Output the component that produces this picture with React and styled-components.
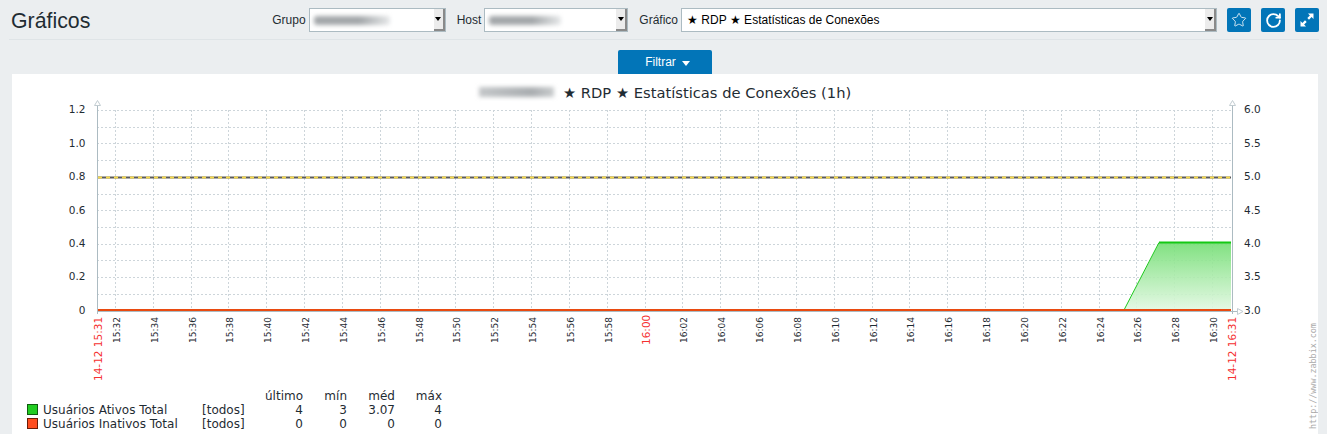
import React from 'react'
import styled, { createGlobalStyle } from 'styled-components'
import { Star, RotateCw } from 'lucide-react'

const GlobalStyle = createGlobalStyle`
    html, body {
        margin: 0;
        padding: 0;
        background-color: #ebeef0;
        height: 434px;
        overflow: hidden;
    }
`

const Page = styled.div`
    width: 1327px;
    height: 434px;
    overflow: hidden;
    font-family: "Liberation Sans", Arial, sans-serif;
    color: #1f2c33;
`

const Header = styled.header`
    height: 39px;
    margin: 0 8px 0 9px;
    box-sizing: content-box;
    border-bottom: 1px solid #dfe4e7;
    display: flex;
    align-items: flex-start;
    justify-content: space-between;
`

const Title = styled.h1`
    margin: 7px 0 0 2px;
    font-size: 21.3px;
    line-height: 28px;
    font-weight: 400;
`

const Controls = styled.div`
    display: flex;
    align-items: center;
    height: 24px;
    margin-top: 8px;
`

const Label = styled.label`
    font-size: 12px;
    margin-right: 3px;
    margin-left: ${({ $gap }) => $gap || 0}px;
`

const Select = styled.div`
    width: ${({ $width }) => $width}px;
    height: 24px;
    box-sizing: border-box;
    border: 1px solid #acbbc2;
    background-color: #ffffff;
    display: flex;
    align-items: center;
    justify-content: space-between;
    font-size: 12px;
    color: #000000;
`

const SelectText = styled.span`
    padding-left: 5px;
`

const Blurred = styled.span`
    display: block;
    width: ${({ $width }) => $width}px;
    height: 9px;
    margin-left: 4px;
    background: linear-gradient(to right, #a3a7aa 60%, #e6e8e9);
    border-radius: 3px;
    filter: blur(2px);
`

const Arrow = styled.span`
    width: 11px;
    height: 22px;
    box-sizing: border-box;
    background-color: #ececec;
    border-right: 2px solid #8a8a8a;
    border-bottom: 2px solid #8a8a8a;
    display: flex;
    align-items: center;
    justify-content: center;
    &::after {
        content: '';
        border-left: 3px solid transparent;
        border-right: 3px solid transparent;
        border-top: 4px solid #000000;
    }
`

const IconButton = styled.button`
    width: 24px;
    height: 24px;
    margin-left: 10px;
    padding: 0;
    border: none;
    border-radius: 2px;
    background-color: #0275b8;
    color: #ffffff;
    display: flex;
    align-items: center;
    justify-content: center;
`

const FilterRow = styled.div`
    display: flex;
    justify-content: center;
    padding-top: 10px;
    padding-left: 3px;
`

const FilterTab = styled.button`
    width: 94px;
    height: 24px;
    padding: 0 0 0 5px;
    border: none;
    border-radius: 2px 2px 0 0;
    background-color: #0275b8;
    color: #ffffff;
    font-family: inherit;
    font-size: 12px;
    display: flex;
    align-items: center;
    justify-content: center;
    gap: 6px;
    &::after {
        content: '';
        margin-top: 3px;
        border-left: 4.5px solid transparent;
        border-right: 4.5px solid transparent;
        border-top: 5px solid #ffffff;
    }
`

const Panel = styled.main`
    width: 1306px;
    height: 360px;
    margin-left: 12px;
    background-color: #ffffff;
`

const Graph = styled.svg`
    display: block;
    font-family: "DejaVu Sans", sans-serif;
`

const GraphText = styled.text`
    font-size: ${({ $size }) => $size || 10.5}px;
    fill: ${({ $color }) => $color || '#1f2c33'};
`

const X0 = 97
const X1 = 1232
const PER_MIN = (X1 - X0) / 60
const yMajor = [
    ['1.2', '6.0'], ['1.0', '5.5'], ['0.8', '5.0'], ['0.6', '4.5'],
    ['0.4', '4.0'], ['0.2', '3.5'], ['0', '3.0'],
]
const rowY = (i) => 109.4 + i * 33.4

const minutes = []
for (let m = 32; m <= 90; m += 2) minutes.push(m)
const timeLabel = (m) => `${m < 60 ? 15 : 16}:${String(m % 60).padStart(2, '0')}`
const minX = (m) => Math.round(X0 + (m - 31) * PER_MIN) + 0.5

const legendRows = [
    { name: 'Usuários Ativos Total', fill: '#22cc22', stroke: '#0f5c0f', values: ['4', '3', '3.07', '4'], y: 414, box: 404.5 },
    { name: 'Usuários Inativos Total', fill: '#ff4d1f', stroke: '#6b1c08', values: ['0', '0', '0', '0'], y: 428, box: 418.5 },
]
const legendCols = [
    { head: 'último', x: 303 },
    { head: 'mín', x: 347 },
    { head: 'méd', x: 395 },
    { head: 'máx', x: 442 },
]

const Chart = () => (
    <Graph width="1306" height="360" viewBox="12 74 1306 360">
        <defs>
            <linearGradient id="area" x1="0" y1="0" x2="0" y2="1">
                <stop offset="0" stopColor="#74de74" />
                <stop offset="1" stopColor="#e2f8e2" />
            </linearGradient>
            <linearGradient id="fade" x1="0" y1="0" x2="1" y2="0">
                <stop offset="0" stopColor="#c4c7c9" />
                <stop offset="0.7" stopColor="#a9adb0" />
                <stop offset="1" stopColor="#c9cccd" />
            </linearGradient>
            <filter id="soft" x="-20%" y="-60%" width="140%" height="220%">
                <feGaussianBlur stdDeviation="2" />
            </filter>
        </defs>

        <rect x="479" y="87" width="75" height="10" fill="url(#fade)" filter="url(#soft)" />
        <GraphText x="563" y="98" $size={14.7}>★ RDP ★ Estatísticas de Conexões (1h)</GraphText>

        {/* grid */}
        <g stroke="#cdd5da" strokeDasharray="2 2" shapeRendering="crispEdges">
            {Array.from({ length: 12 }, (_, i) => {
                const y = Math.round(110 + i * 16.7) + 0.5
                return <line key={i} x1={X0} x2={X1} y1={y} y2={y} />
            })}
            {minutes.map((m) => (
                <line key={m} x1={minX(m) - 1} x2={minX(m) - 1} y1="110" y2="310" />
            ))}
        </g>

        {/* green item */}
        <polygon points="1124,310 1159,243 1231,243 1231,310" fill="url(#area)" fillOpacity="0.9" />
        <polyline points="1124,310 1159,242.5" fill="none" stroke="#1ec81e" strokeWidth="1" />
        <line x1="1159" x2="1231" y1="242.5" y2="242.5" stroke="#14c814" strokeWidth="2" />

        {/* trigger lines */}
        <line x1="98" x2="1231" y1="177.5" y2="177.5" stroke="#5a5a5a" strokeWidth="2" />
        <line x1="98" x2="1231" y1="177.5" y2="177.5" stroke="#f5d94e" strokeWidth="2" strokeDasharray="4 4" />

        {/* inactive item */}
        <line x1="98" x2="1231" y1="310" y2="310" stroke="#e94a10" strokeWidth="2" />

        {/* axes */}
        <g stroke="#acbbc2" shapeRendering="crispEdges">
            <line x1="97.5" x2="97.5" y1="105" y2="314" />
            <line x1="1232.5" x2="1232.5" y1="105" y2="314" />
            <line x1="97" x2="1238" y1="311.5" y2="311.5" />
        </g>
        <g fill="#ffffff" stroke="#c2ccd1">
            <polygon points="97.5,100.5 94.5,105.5 100.5,105.5" />
            <polygon points="1232.5,100.5 1229.5,105.5 1235.5,105.5" />
            <polygon points="1243,311.5 1237.5,308.5 1237.5,314.5" />
        </g>

        {yMajor.map(([left, right], i) => (
            <g key={left}>
                <GraphText x="85.5" y={rowY(i) + 4} textAnchor="end">{left}</GraphText>
                <GraphText x="1244" y={rowY(i) + 4}>{right}</GraphText>
            </g>
        ))}

        {minutes.map((m) => {
            const red = m === 60
            return (
                <GraphText
                    key={m}
                    transform={`translate(${minX(m) + 3.5} ${red ? 345 : 343}) rotate(-90)`}
                    $size={red ? 10.5 : 9}
                    $color={red ? '#f53030' : '#1f2c33'}
                >
                    {timeLabel(m)}
                </GraphText>
            )
        })}
        <GraphText transform="translate(102 381) rotate(-90)" $color="#f53030">14-12 15:31</GraphText>
        <GraphText transform="translate(1236 381) rotate(-90)" $color="#f53030">14-12 16:31</GraphText>

        {legendCols.map((c) => (
            <GraphText key={c.head} x={c.x} y="400" textAnchor="end" $size={12}>{c.head}</GraphText>
        ))}
        {legendRows.map((row) => (
            <g key={row.name}>
                <rect x="27.5" y={row.box} width="10" height="10" fill={row.fill} stroke={row.stroke} shapeRendering="crispEdges" />
                <GraphText x="43" y={row.y} $size={12}>{row.name}</GraphText>
                <GraphText x="202" y={row.y} $size={12}>[todos]</GraphText>
                {row.values.map((v, i) => (
                    <GraphText key={i} x={legendCols[i].x} y={row.y} textAnchor="end" $size={12}>{v}</GraphText>
                ))}
            </g>
        ))}

        <GraphText
            transform="translate(1316 429) rotate(-90)"
            $size={8.4}
            $color="#a9a9a9"
            style={{ fontFamily: '"DejaVu Sans Mono", monospace' }}
        >
            http://www.zabbix.com
        </GraphText>
    </Graph>
)

const ExpandIcon = () => (
    <svg width="16" height="16" viewBox="0 0 16 16" fill="#ffffff">
        <path d="M9 1.5h5.5V7l-1.9-1.9-2.6 2.6-1.7-1.7 2.6-2.6z" />
        <path d="M7 14.5H1.5V9l1.9 1.9 2.6-2.6 1.7 1.7-2.6 2.6z" />
    </svg>
)

const App = () => (
    <Page>
        <GlobalStyle />
        <Header>
            <Title>Gráficos</Title>
            <Controls>
                <Label>Grupo</Label>
                <Select $width={137}>
                    <Blurred $width={76} />
                    <Arrow />
                </Select>
                <Label $gap={11}>Host</Label>
                <Select $width={144}>
                    <Blurred $width={72} />
                    <Arrow />
                </Select>
                <Label $gap={11}>Gráfico</Label>
                <Select $width={536}>
                    <SelectText>★ RDP ★ Estatísticas de Conexões</SelectText>
                    <Arrow />
                </Select>
                <IconButton><Star size={16} strokeWidth={1.2} /></IconButton>
                <IconButton><RotateCw size={17} strokeWidth={2.6} /></IconButton>
                <IconButton><ExpandIcon /></IconButton>
            </Controls>
        </Header>
        <FilterRow>
            <FilterTab>Filtrar</FilterTab>
        </FilterRow>
        <Panel>
            <Chart />
        </Panel>
    </Page>
)

export default App
